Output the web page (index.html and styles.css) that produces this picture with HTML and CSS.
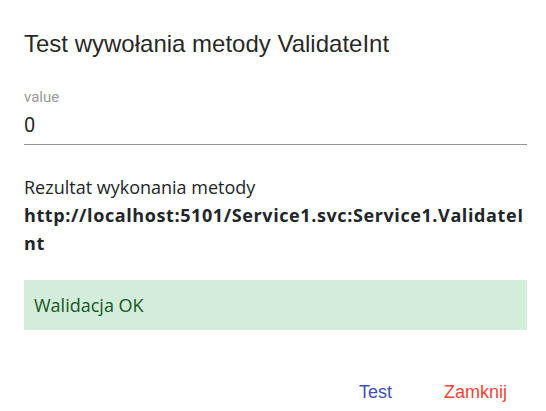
FILE: index.html
```html
<!DOCTYPE html>
<html lang="pl">

<head>
    <meta charset="UTF-8">
    <meta name="viewport" content="width=device-width, initial-scale=1.0">
    <title>Test wywołania metody</title>
    <link rel="stylesheet" href="styles.css">
</head>

<body>

    <!-- Dialog -->
    <div class="dialog">
        <h1 class="dialog-title">Test wywołania metody ValidateInt</h1>

        <div class="dialog-content">
            <label class="field">
                <span class="field-label">value</span>
                <input class="field-input" type="text" value="0">
            </label>

            <div class="result">
                <div class="result-caption">Rezultat wykonania metody</div>
                <div class="result-url">http://localhost:5101/Service1.svc:Service1.ValidateInt</div>
            </div>

            <div class="alert alert-success">Walidacja OK</div>
        </div>

        <div class="dialog-actions">
            <button class="btn btn-primary" type="button">Test</button>
            <button class="btn btn-warn" type="button">Zamknij</button>
        </div>
    </div>

</body>

</html>
```

FILE: styles.css
```css
body,
html {
    margin: 0;
    padding: 0;
    background-color: #ffffff;
}

/* Dialog */
.dialog {
    box-sizing: border-box;
    width: 546px;
    padding: 28px 19px 0 24px;
}

.dialog-title {
    margin: 0;
    font-family: 'Liberation Sans', Arial, sans-serif;
    font-size: 24px;
    font-weight: 400;
    line-height: 32px;
    color: rgba(0, 0, 0, 0.87);
}

.dialog-content {
    padding-top: 28px;
}

/* Form field */
.field {
    display: flex;
    flex-direction: column;
    border-bottom: 1px solid #949494;
    padding-bottom: 7px;
}

.field-label {
    font-family: Roboto, sans-serif;
    font-size: 15px;
    line-height: 18px;
    color: #9a9a9a;
}

.field-input {
    border: none;
    outline: none;
    padding: 0;
    margin-top: 7px;
    font-family: Roboto, sans-serif;
    font-size: 20px;
    line-height: 24px;
    color: rgba(0, 0, 0, 0.87);
    background: transparent;
}

/* Result */
.result {
    margin-top: 28px;
    font-family: 'Open Sans', sans-serif;
    font-size: 18px;
    line-height: 28px;
    color: #212529;
}

.result-url {
    font-weight: 700;
    letter-spacing: 0.6px;
    word-break: break-all;
}

.alert {
    margin-top: 23px;
    padding: 11px 10px;
    font-family: 'Open Sans', sans-serif;
    font-size: 18px;
    line-height: 28px;
}

.alert-success {
    background-color: #d4edda;
    color: #155724;
}

/* Actions */
.dialog-actions {
    display: flex;
    justify-content: flex-end;
    gap: 20px;
    padding: 44px 4px 0 0;
}

.btn {
    min-width: 64px;
    padding: 0 16px;
    border: none;
    background: transparent;
    font-family: 'Liberation Sans', Arial, sans-serif;
    font-size: 18px;
    line-height: 36px;
    cursor: pointer;
}

.btn-primary {
    color: #3f51b5;
}

.btn-warn {
    color: #f44336;
}
```
